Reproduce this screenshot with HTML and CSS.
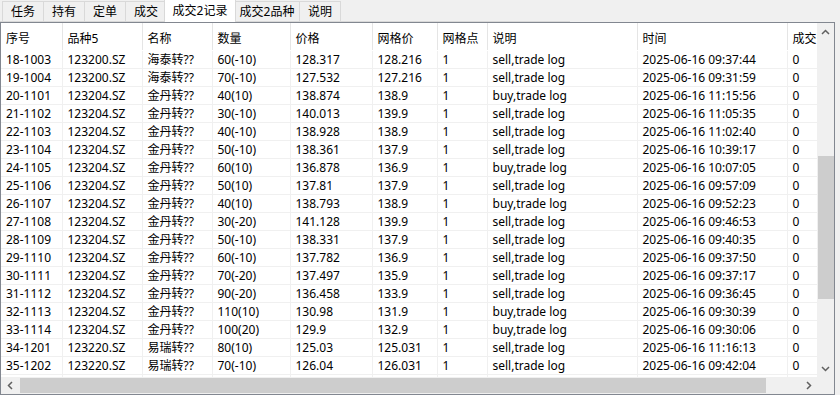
FILE: index.html
```html
<!DOCTYPE html>
<html lang="zh">
<head>
    <meta charset="UTF-8">
    <title>成交2记录</title>
    <link rel="stylesheet" href="styles.css">
</head>
<body>

    <div class="tabs">
        <div class="tab">任务</div>
        <div class="tab">持有</div>
        <div class="tab">定单</div>
        <div class="tab">成交</div>
        <div class="tab wide active">成交2记录</div>
        <div class="tab wide">成交2品种</div>
        <div class="tab">说明</div>
    </div>

    <div class="frame">
        <div class="upper">
            <div class="viewport">
                <table class="grid">
                    <colgroup>
                        <col style="width:61px"><col style="width:80px"><col style="width:70px">
                        <col style="width:78px"><col style="width:82px"><col style="width:65px">
                        <col style="width:50px"><col style="width:150px"><col style="width:150px">
                        <col style="width:100px">
                    </colgroup>
                    <thead>
                        <tr><th>序号</th><th>品种5</th><th>名称</th><th>数量</th><th>价格</th><th>网格价</th><th>网格点</th><th>说明</th><th>时间</th><th>成交</th></tr>
                    </thead>
                    <tbody>
                        <tr><td>18-1003</td><td>123200.SZ</td><td>海泰转??</td><td>60(-10)</td><td>128.317</td><td>128.216</td><td>1</td><td>sell,trade log</td><td>2025-06-16 09:37:44</td><td>0</td></tr>
                        <tr><td>19-1004</td><td>123200.SZ</td><td>海泰转??</td><td>70(-10)</td><td>127.532</td><td>127.216</td><td>1</td><td>sell,trade log</td><td>2025-06-16 09:31:59</td><td>0</td></tr>
                        <tr><td>20-1101</td><td>123204.SZ</td><td>金丹转??</td><td>40(10)</td><td>138.874</td><td>138.9</td><td>1</td><td>buy,trade log</td><td>2025-06-16 11:15:56</td><td>0</td></tr>
                        <tr><td>21-1102</td><td>123204.SZ</td><td>金丹转??</td><td>30(-10)</td><td>140.013</td><td>139.9</td><td>1</td><td>sell,trade log</td><td>2025-06-16 11:05:35</td><td>0</td></tr>
                        <tr><td>22-1103</td><td>123204.SZ</td><td>金丹转??</td><td>40(-10)</td><td>138.928</td><td>138.9</td><td>1</td><td>sell,trade log</td><td>2025-06-16 11:02:40</td><td>0</td></tr>
                        <tr><td>23-1104</td><td>123204.SZ</td><td>金丹转??</td><td>50(-10)</td><td>138.361</td><td>137.9</td><td>1</td><td>sell,trade log</td><td>2025-06-16 10:39:17</td><td>0</td></tr>
                        <tr><td>24-1105</td><td>123204.SZ</td><td>金丹转??</td><td>60(10)</td><td>136.878</td><td>136.9</td><td>1</td><td>buy,trade log</td><td>2025-06-16 10:07:05</td><td>0</td></tr>
                        <tr><td>25-1106</td><td>123204.SZ</td><td>金丹转??</td><td>50(10)</td><td>137.81</td><td>137.9</td><td>1</td><td>sell,trade log</td><td>2025-06-16 09:57:09</td><td>0</td></tr>
                        <tr><td>26-1107</td><td>123204.SZ</td><td>金丹转??</td><td>40(10)</td><td>138.793</td><td>138.9</td><td>1</td><td>buy,trade log</td><td>2025-06-16 09:52:23</td><td>0</td></tr>
                        <tr><td>27-1108</td><td>123204.SZ</td><td>金丹转??</td><td>30(-20)</td><td>141.128</td><td>139.9</td><td>1</td><td>sell,trade log</td><td>2025-06-16 09:46:53</td><td>0</td></tr>
                        <tr><td>28-1109</td><td>123204.SZ</td><td>金丹转??</td><td>50(-10)</td><td>138.331</td><td>137.9</td><td>1</td><td>sell,trade log</td><td>2025-06-16 09:40:35</td><td>0</td></tr>
                        <tr><td>29-1110</td><td>123204.SZ</td><td>金丹转??</td><td>60(-10)</td><td>137.782</td><td>136.9</td><td>1</td><td>sell,trade log</td><td>2025-06-16 09:37:50</td><td>0</td></tr>
                        <tr><td>30-1111</td><td>123204.SZ</td><td>金丹转??</td><td>70(-20)</td><td>137.497</td><td>135.9</td><td>1</td><td>sell,trade log</td><td>2025-06-16 09:37:17</td><td>0</td></tr>
                        <tr><td>31-1112</td><td>123204.SZ</td><td>金丹转??</td><td>90(-20)</td><td>136.458</td><td>133.9</td><td>1</td><td>sell,trade log</td><td>2025-06-16 09:36:45</td><td>0</td></tr>
                        <tr><td>32-1113</td><td>123204.SZ</td><td>金丹转??</td><td>110(10)</td><td>130.98</td><td>131.9</td><td>1</td><td>buy,trade log</td><td>2025-06-16 09:30:39</td><td>0</td></tr>
                        <tr><td>33-1114</td><td>123204.SZ</td><td>金丹转??</td><td>100(20)</td><td>129.9</td><td>132.9</td><td>1</td><td>buy,trade log</td><td>2025-06-16 09:30:06</td><td>0</td></tr>
                        <tr><td>34-1201</td><td>123220.SZ</td><td>易瑞转??</td><td>80(10)</td><td>125.03</td><td>125.031</td><td>1</td><td>sell,trade log</td><td>2025-06-16 11:16:13</td><td>0</td></tr>
                        <tr><td>35-1202</td><td>123220.SZ</td><td>易瑞转??</td><td>70(-10)</td><td>126.04</td><td>126.031</td><td>1</td><td>sell,trade log</td><td>2025-06-16 09:42:04</td><td>0</td></tr>
                        <tr><td></td><td></td><td></td><td></td><td></td><td></td><td></td><td></td><td></td><td></td></tr>
                    </tbody>
                </table>
            </div>

            <div class="vscroll">
                <div class="arrow">
                    <svg width="9" height="6" viewBox="0 0 9 6"><path d="M1 5 L4.5 1.5 L8 5" fill="none" stroke="#606060" stroke-width="1.5"/></svg>
                </div>
                <div class="vtrack"><div class="vthumb"></div></div>
                <div class="arrow">
                    <svg width="9" height="6" viewBox="0 0 9 6"><path d="M1 1 L4.5 4.5 L8 1" fill="none" stroke="#606060" stroke-width="1.5"/></svg>
                </div>
            </div>
        </div>

        <div class="hscroll">
            <div class="arrow">
                <svg width="6" height="9" viewBox="0 0 6 9"><path d="M5 1 L1.5 4.5 L5 8" fill="none" stroke="#606060" stroke-width="1.5"/></svg>
            </div>
            <div class="htrack"><div class="hthumb"></div></div>
            <div class="arrow">
                <svg width="6" height="9" viewBox="0 0 6 9"><path d="M1 1 L4.5 4.5 L1 8" fill="none" stroke="#606060" stroke-width="1.5"/></svg>
            </div>
            <div class="corner"></div>
        </div>
    </div>

</body>
</html>
```

FILE: styles.css
```css
body {
    margin: 0;
    background-color: #f0f0f0;
    font-family: "Noto Sans", "Noto Sans CJK SC", sans-serif;
    font-size: 12px;
    color: #000;
    overflow: hidden;
}

.tabs {
    display: flex;
    align-items: flex-end;
    width: 570px;
    height: 22px;
    padding-left: 2px;
    border-bottom: 1px solid #d9d9d9;
    box-sizing: border-box;
}

.tab {
    width: 42px;
    height: 20px;
    line-height: 19px;
    text-align: center;
    font-size: 12px;
    background-color: #f0f0f0;
    border: 1px solid #d9d9d9;
    border-bottom: none;
    margin-right: -1px;
    box-sizing: border-box;
    flex-shrink: 0;
}

.tab.wide {
    width: 66px;
}

.tab.active {
    position: relative;
    width: 72px;
    height: 23px;
    margin: 0 -2px -1px -2px;
    line-height: 22px;
    background-color: #fff;
    z-index: 1;
}

.frame {
    width: 835px;
    height: 373px;
    border: 1px solid #828790;
    box-sizing: border-box;
    background-color: #fff;
    display: flex;
    flex-direction: column;
}

.upper {
    display: flex;
    height: 354px;
}

.viewport {
    width: 816px;
    height: 354px;
    overflow: hidden;
}

.grid {
    table-layout: fixed;
    border-collapse: collapse;
    width: 886px;
}

.grid th,
.grid td {
    padding: 0 0 0 5px;
    text-align: left;
    font-weight: normal;
    white-space: nowrap;
    overflow: hidden;
    border-right: 1px solid #f0f0f0;
    border-bottom: 1px solid #f0f0f0;
}

.grid th {
    height: 25px;
    padding-top: 2px;
    border-right-color: #e5e5e5;
    border-bottom-color: #fff;
}

.grid td {
    height: 17px;
    line-height: 17px;
}

.vscroll {
    width: 17px;
    display: flex;
    flex-direction: column;
    background-color: #f0f0f0;
}

.arrow {
    width: 17px;
    height: 17px;
    display: flex;
    align-items: center;
    justify-content: center;
    flex-shrink: 0;
}

.vtrack {
    flex: 1;
}

.vthumb {
    margin: 116px 0 0 1px;
    width: 16px;
    height: 143px;
    background-color: #cdcdcd;
}

.hscroll {
    display: flex;
    height: 17px;
    background-color: #f0f0f0;
}

.htrack {
    width: 782px;
}

.hthumb {
    margin: 1px 0 0 2px;
    width: 746px;
    height: 15px;
    background-color: #cdcdcd;
}

.corner {
    width: 17px;
    background-color: #f0f0f0;
}
```
